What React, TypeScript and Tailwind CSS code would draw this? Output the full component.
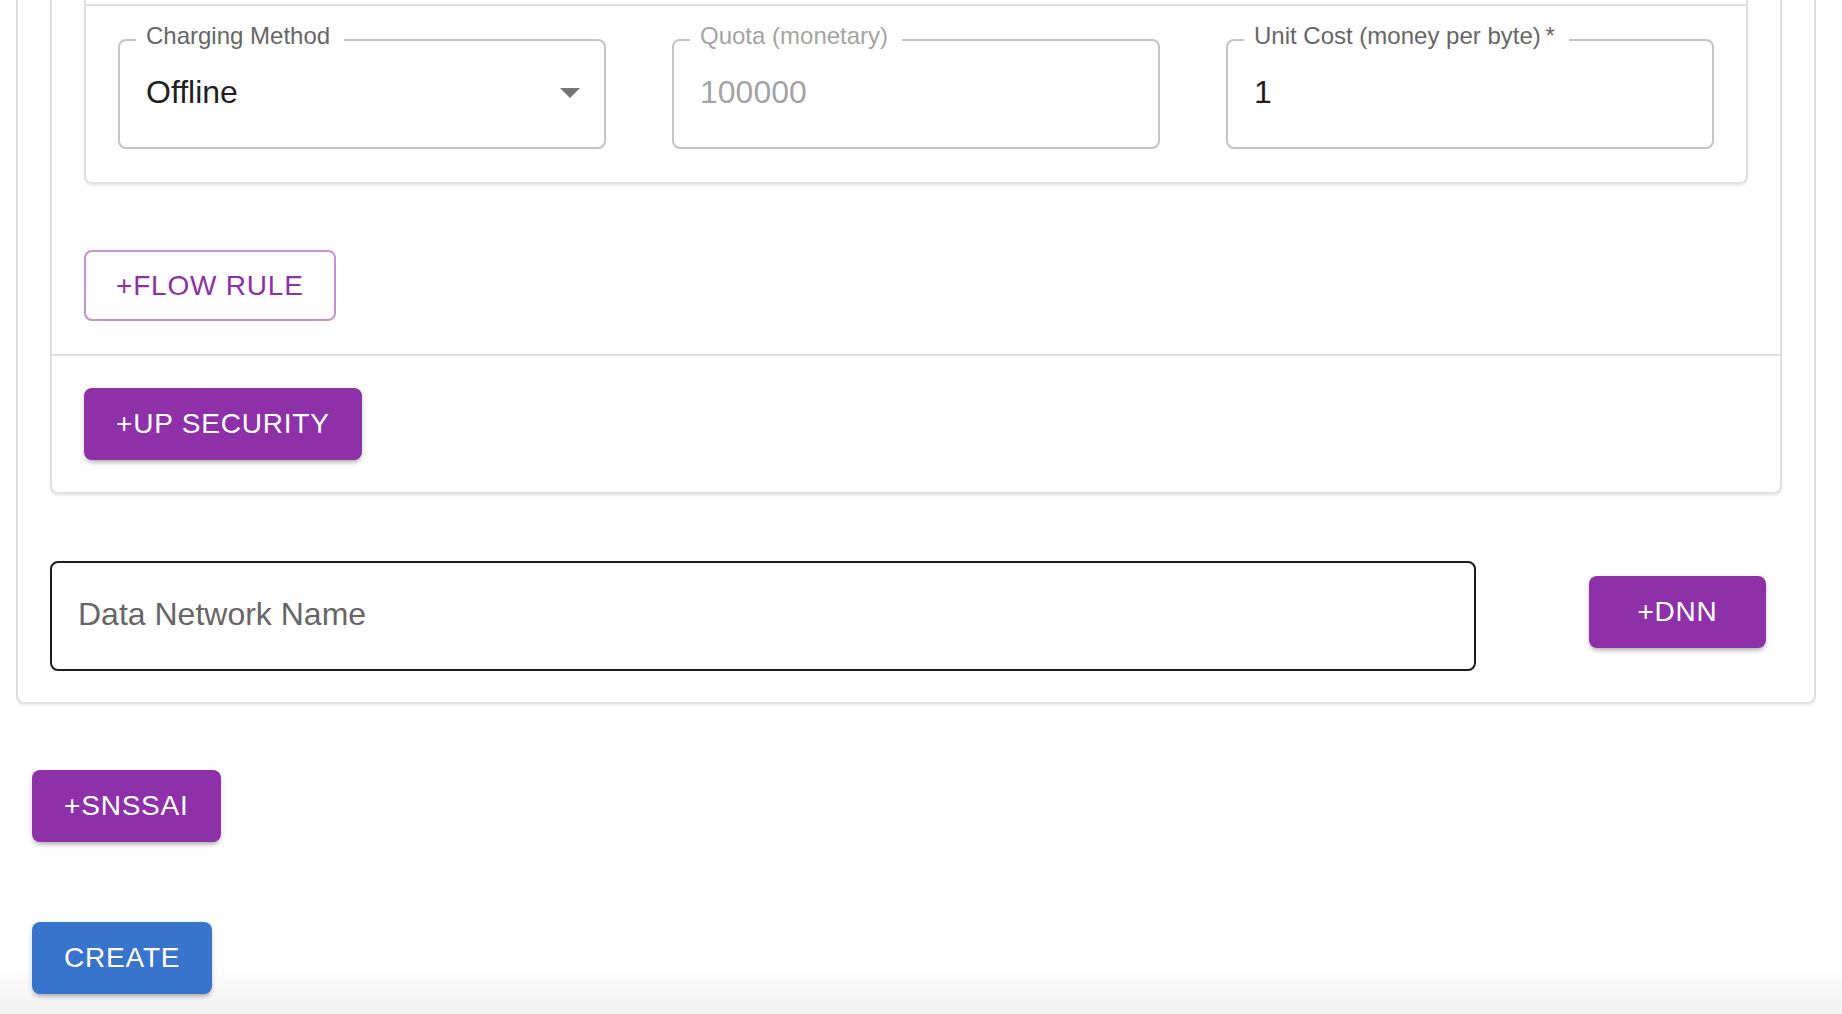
import React from 'react';

interface FieldProps {
  label: string;
  value: string;
  disabled?: boolean;
  select?: boolean;
}

// outlined text field with the floating label sitting in the notch
const OutlinedField: React.FC<FieldProps> = ({ label, value, disabled, select }) => (
  <div
    className={`relative flex h-[110px] items-center rounded-lg border-2 border-[#c4c4c4] pb-[4px] pl-[26px] ${
      select ? 'pr-[10px]' : 'pr-[26px]'
    }`}
  >
    <span
      className={`absolute left-[16px] top-[-17px] bg-white pl-[10px] pr-[14px] text-[24px] leading-none whitespace-nowrap ${
        disabled ? 'text-[#a4a4a4]' : 'text-[#666666]'
      }`}
    >
      {label}
    </span>
    <span className={`text-[32px] leading-none ${disabled ? 'text-[#a4a4a4]' : 'text-[#1f1f1f]'}`}>
      {value}
    </span>
    {select && (
      <svg viewBox="0 0 24 24" className="ml-auto h-[48px] w-[48px]">
        <path d="M7 10l5 5 5-5z" fill="#757575" />
      </svg>
    )}
  </div>
);

const containedBtn =
  'inline-flex h-[72px] items-center justify-center rounded-lg px-[32px] text-[28px] font-medium uppercase tracking-[0.8px] text-white shadow-[0_4px_4px_-2px_rgba(0,0,0,0.25),0_2px_6px_rgba(0,0,0,0.12)]';

const App: React.FC = () => {
  return (
    <div className="h-screen overflow-hidden bg-linear-to-b from-white from-95% to-[#f2f2f2] font-['Liberation_Sans',Arial,Helvetica,sans-serif]">
      {/* S-NSSAI card, scrolled so its top is out of view */}
      <div className="ml-[16px] mr-[26px] -mt-[97px] rounded-lg border-2 border-[#e0e0e0] bg-white px-[32px] pt-[32px] pb-[31px] shadow-[0_2px_2px_rgba(0,0,0,0.06)]">
        {/* DNN card */}
        <div className="rounded-lg border-2 border-[#e0e0e0] shadow-[0_2px_2px_rgba(0,0,0,0.08)]">
          <div className="px-[32px] pt-[32px] pb-[33px]">
            {/* Flow rule card */}
            <div className="rounded-lg border-2 border-[#e0e0e0] shadow-[0_2px_2px_rgba(0,0,0,0.08)]">
              <div className="h-[31px]" />
              <div className="border-t-2 border-[#e0e0e0] px-[32px] pt-[33px] pb-[33px]">
                <div className="grid grid-cols-3 gap-x-[66px]">
                  <OutlinedField label="Charging Method" value="Offline" select />
                  <OutlinedField label="Quota (monetary)" value="100000" disabled />
                  <OutlinedField label={'Unit Cost (money per byte)\u2009*'} value="1" />
                </div>
              </div>
            </div>

            <button className="mt-[66px] inline-flex h-[71px] items-center justify-center rounded-lg border-2 border-[#c690d2] px-[30px] text-[28px] font-medium uppercase tracking-[0.8px] text-[#8e30a8]">
              +Flow Rule
            </button>
          </div>

          <div className="border-t-2 border-[#e0e0e0] px-[32px] pt-[32px] pb-[32px]">
            <button className={`${containedBtn} bg-[#8e30a8]`}>+UP Security</button>
          </div>
        </div>

        {/* DNN name row */}
        <div className="mt-[67px] flex items-start">
          <div className="flex h-[110px] w-[1426px] items-center rounded-lg border-2 border-[#1c1c1c] pb-[4px] pl-[26px]">
            <span className="text-[32px] leading-none text-[#666666]">Data Network Name</span>
          </div>
          <button className={`${containedBtn} ml-auto mr-[16px] mt-[15px] w-[177px] bg-[#8e30a8]`}>+DNN</button>
        </div>
      </div>

      <div className="ml-[32px] mt-[66px] flex flex-col items-start gap-[80px]">
        <button className={`${containedBtn} bg-[#8e30a8]`}>+SNSSAI</button>
        <button className={`${containedBtn} bg-[#3874cb]`}>Create</button>
      </div>
    </div>
  );
};

export default App;
